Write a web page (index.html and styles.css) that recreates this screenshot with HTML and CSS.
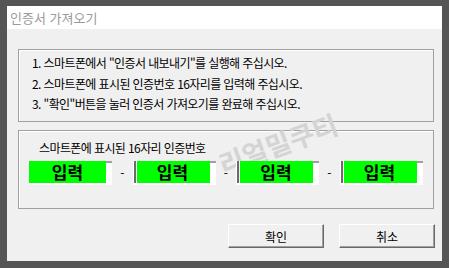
FILE: index.html
```html
<!DOCTYPE html>
<html lang="ko">
<head>
    <meta charset="UTF-8">
    <title>인증서 가져오기</title>
    <link rel="stylesheet" href="styles.css">
</head>
<body>
    <div class="window">
        <div class="titlebar">인증서 가져오기</div>
        <div class="content">
            <div class="group steps">
                <p>1. 스마트폰에서 "인증서 내보내기"를 실행해 주십시오.</p>
                <p>2. 스마트폰에 표시된 인증번호 16자리를 입력해 주십시오.</p>
                <p>3. "확인"버튼을 눌러 인증서 가져오기를 완료해 주십시오.</p>
            </div>
            <div class="group code">
                <div class="code-label">스마트폰에 표시된 16자리 인증번호</div>
                <div class="code-row">
                    <div class="code-box">
                        <div class="code-field">입력</div>
                        <div class="code-scroll"></div>
                    </div>
                    <span class="sep">-</span>
                    <div class="code-box inset">
                        <div class="code-field">입력</div>
                        <div class="code-scroll"></div>
                    </div>
                    <span class="sep">-</span>
                    <div class="code-box inset">
                        <div class="code-field">입력</div>
                        <div class="code-scroll"></div>
                    </div>
                    <span class="sep">-</span>
                    <div class="code-box inset">
                        <div class="code-field">입력</div>
                        <div class="code-scroll"></div>
                    </div>
                </div>
            </div>
            <div class="actions">
                <button class="btn">확인</button>
                <button class="btn">취소</button>
            </div>
            <div class="watermark">리얼밀쿠티</div>
        </div>
    </div>
</body>
</html>
```
FILE: styles.css
```css
body {
    margin: 0;
    background-color: #555555;
    font-family: "Noto Sans CJK KR", "Noto Sans", sans-serif;
    font-size: 12px;
    color: #000;
}
.window {
    margin: 6px 7px 7px 7px;
    height: 255px;
    display: flex;
    flex-direction: column;
}
.titlebar {
    height: 23px;
    line-height: 23px;
    background-color: #fff;
    color: #9a9a9a;
    font-size: 13px;
    padding-left: 3px;
}
.content {
    flex: 1;
    background-color: #f0f0f0;
    padding: 20px 8px 0 11px;
    position: relative;
}
.group {
    border: 1px solid #a0a0a0;
    box-shadow: inset 1px 1px #fff;
    box-sizing: border-box;
}
.steps {
    height: 73px;
    padding: 3px 0 0 13px;
    letter-spacing: -0.6px;
}
.steps p {
    margin: 0;
    line-height: 20.5px;
}
.code {
    height: 79px;
    margin-top: 8px;
    padding: 10px 0 0 10px;
}
.code-label {
    line-height: 14px;
    padding-left: 10px;
    margin-bottom: 6px;
    letter-spacing: -0.6px;
}
.code-row {
    display: flex;
    align-items: center;
    position: relative;
    z-index: 1;
}
.code-box {
    width: 83px;
    height: 24px;
    box-sizing: border-box;
    display: flex;
    background-color: #fff;
    padding-bottom: 2px;
}
.code-box.inset {
    padding-left: 1px;
}
.code-box.inset .code-field {
    border-left: 2px solid #6b6b6b;
    box-shadow: inset 1px 0 #fff;
}
.code-field {
    flex: 1;
    background-color: #00ff00;
    font-size: 17px;
    font-weight: bold;
    text-align: center;
    line-height: 22px;
}
.code-scroll {
    width: 6px;
    border-top: 2px solid #a0a0a0;
}
.sep {
    width: 20.5px;
    text-align: center;
    line-height: 24px;
}
.actions {
    display: flex;
    justify-content: flex-end;
    gap: 15px;
    margin-top: 15px;
    margin-right: -1px;
}
.btn {
    width: 96px;
    height: 24px;
    background-color: #f0f0f0;
    border: 1px solid;
    border-color: #fff #696969 #696969 #fff;
    box-shadow: inset -1px -1px #a0a0a0;
    font-family: inherit;
    font-size: 12px;
    color: #000;
    padding: 0;
}
.watermark {
    position: absolute;
    left: 201px;
    top: 101px;
    width: 140px;
    white-space: nowrap;
    text-align: center;
    font-size: 27px;
    line-height: 28px;
    font-weight: bold;
    color: #d4d4d4;
    transform: rotate(-20deg);
    pointer-events: none;
}
```
